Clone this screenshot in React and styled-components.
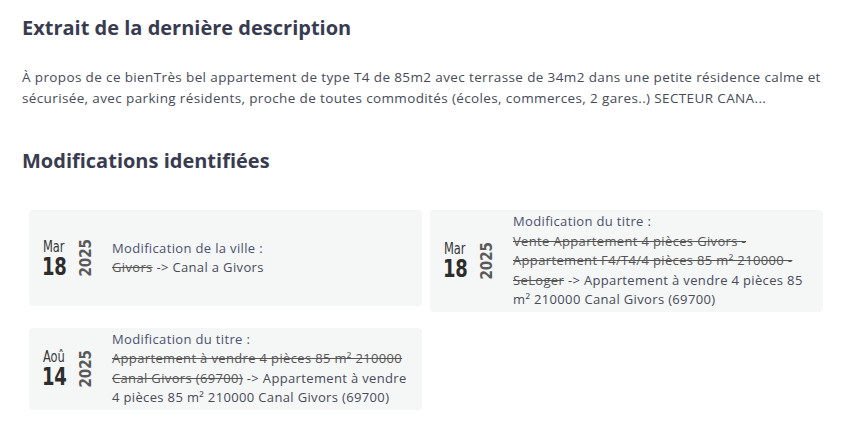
import React from "react";
import styled, { createGlobalStyle } from "styled-components";

const GlobalStyle = createGlobalStyle`
  body {
    margin: 0;
    background: #ffffff;
    font-family: "Open Sans", "Noto Sans", sans-serif;
    color: #474b5a;
  }
`;

const Page = styled.div`
  padding: 14px 22px 0 22px;
`;

const Title = styled.h2`
  margin: 0;
  font-size: 20px;
  font-weight: 700;
  color: #393c50;
  line-height: 28px;
`;

const Excerpt = styled.p`
  margin: 25px 0 0 0;
  font-size: 13.5px;
  letter-spacing: 0.37px;
  line-height: 21px;
  color: #474b5a;
  max-width: 800px;
`;

const SecondTitle = styled(Title)`
  margin-top: 38px;
`;

const Grid = styled.div`
  margin: 35px 0 0 7px;
  display: grid;
  grid-template-columns: 393px 393px;
  column-gap: 8px;
  row-gap: 16px;
  align-items: start;
`;

const Card = styled.div`
  background: #f5f6f6;
  border-radius: 4px;
  min-height: ${(p) => p.$min || 0}px;
  padding: 2px 8px 2px 11px;
  display: flex;
  align-items: center;
  box-sizing: border-box;
`;

const DateBlock = styled.div`
  display: flex;
  align-items: center;
  width: 72px;
  flex-shrink: 0;
`;

const DayMonth = styled.div`
  display: flex;
  flex-direction: column;
  align-items: center;
  width: 28px;
  font-family: "DejaVu Sans Condensed", "DejaVu Sans", sans-serif;
`;

const Month = styled.span`
  font-size: 15px;
  font-weight: 300;
  line-height: 16px;
  transform: scaleX(0.85);
  color: #3a3a3a;
`;

const Day = styled.span`
  font-size: 25px;
  font-weight: 700;
  line-height: 23px;
  transform: scaleX(0.8);
  letter-spacing: -0.5px;
  color: #2d2d2d;
`;

const Year = styled.span`
  writing-mode: vertical-rl;
  transform: rotate(180deg);
  font-family: "DejaVu Sans Condensed", "DejaVu Sans", sans-serif;
  font-size: 15px;
  font-weight: 700;
  color: #5a5a5a;
  margin-left: 10px;
  line-height: 16px;
`;

const Body = styled.div`
  font-size: 13px;
  letter-spacing: 0.35px;
  line-height: 19.5px;
  color: #474b5a;
`;

const Label = styled.div`
  color: #4a5270;
`;

const Old = styled.s`
  color: #555;
`;

const changes = [
  {
    month: "Mar",
    day: "18",
    year: "2025",
    label: "Modification de la ville :",
    before: "Givors",
    after: "Canal a Givors",
    min: 96,
  },
  {
    month: "Mar",
    day: "18",
    year: "2025",
    label: "Modification du titre :",
    before: "Vente Appartement 4 pièces Givors - Appartement F4/T4/4 pièces 85 m² 210000 - SeLoger",
    after: "Appartement à vendre 4 pièces 85 m² 210000  Canal Givors (69700)",
    min: 99,
  },
  {
    month: "Aoû",
    day: "14",
    year: "2025",
    label: "Modification du titre :",
    before: "Appartement à vendre 4 pièces 85 m² 210000 Canal Givors (69700)",
    after: "Appartement à vendre 4 pièces 85 m² 210000 Canal Givors (69700)",
    min: 0,
  },
];

export default function App() {
  return (
    <Page>
      <GlobalStyle />
      <Title>Extrait de la dernière description</Title>
      <Excerpt>
        À propos de ce bienTrès bel appartement de type T4 de 85m2 avec terrasse de 34m2 dans une petite résidence calme et
        sécurisée, avec parking résidents, proche de toutes commodités (écoles, commerces, 2 gares..) SECTEUR CANA...
      </Excerpt>
      <SecondTitle>Modifications identifiées</SecondTitle>
      <Grid>
        {changes.map((c, i) => (
          <Card key={i} $min={c.min}>
            <DateBlock>
              <DayMonth>
                <Month>{c.month}</Month>
                <Day>{c.day}</Day>
              </DayMonth>
              <Year>{c.year}</Year>
            </DateBlock>
            <Body>
              <Label>{c.label}</Label>
              <Old>{c.before}</Old> -&gt; {c.after}
            </Body>
          </Card>
        ))}
      </Grid>
    </Page>
  );
}
